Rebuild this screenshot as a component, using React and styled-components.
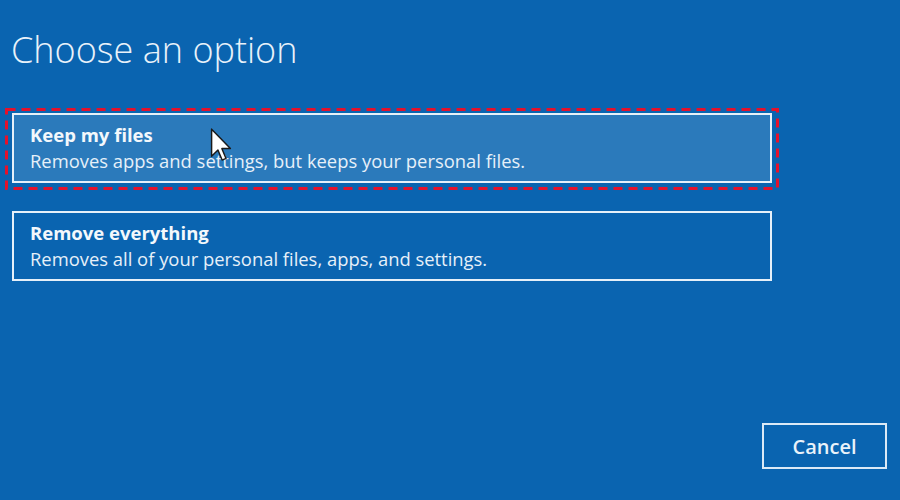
import React from "react";
import styled, { createGlobalStyle } from "styled-components";

const GlobalStyle = createGlobalStyle`
  html, body {
    margin: 0;
    padding: 0;
    background: #0a64b0;
  }
  #root {
    width: 900px;
    height: 500px;
  }
`;

const Screen = styled.div`
  box-sizing: border-box;
  width: 900px;
  height: 500px;
  background: #0a64b0;
  color: #eef5fb;
  font-family: "Open Sans", "Noto Sans", sans-serif;
  display: flex;
  flex-direction: column;
  padding: 27px 13px 31px 12px;
  overflow: hidden;
`;

const Heading = styled.h1`
  margin: 0 0 40px -1px;
  font-size: 36px;
  line-height: 46px;
  font-weight: 300;
  color: #e9f2fa;
  letter-spacing: 0;
`;

const OptionList = styled.div`
  display: flex;
  flex-direction: column;
  gap: 28px;
  width: 760px;
`;

const OptionCard = styled.div`
  position: relative;
  box-sizing: border-box;
  height: 70px;
  border: 2px solid #e6f0f9;
  padding: 8px 16px 6px;
  background: ${(p) => (p.$active ? "#2b7abb" : "transparent")};
  display: flex;
  flex-direction: column;
`;

const OptionTitle = styled.div`
  font-size: 18.5px;
  line-height: 24px;
  font-weight: 700;
  color: #f3f8fc;
`;

const OptionText = styled.div`
  font-size: 18.4px;
  line-height: 28px;
  font-weight: 400;
  color: #e6f0f9;
`;

/* dashed red marker drawn around the highlighted option */
const Marker = styled.svg`
  position: absolute;
  top: -7px;
  left: -9px;
  width: calc(100% + 18px);
  height: calc(100% + 16px);
  overflow: visible;
  pointer-events: none;

  rect {
    x: 1.5px;
    y: 1.5px;
    width: calc(100% - 3px);
    height: calc(100% - 3px);
  }
`;

const Footer = styled.div`
  margin-top: auto;
  display: flex;
  justify-content: flex-end;
`;

const CancelButton = styled.button`
  box-sizing: border-box;
  width: 125px;
  height: 46px;
  border: 2px solid #dbe9f6;
  background: #0a64b0;
  color: #e9f2fa;
  font-family: "Open Sans", "Noto Sans", sans-serif;
  font-size: 20px;
  font-weight: 600;
  padding: 0;
  cursor: default;
`;

const Pointer = styled.svg`
  position: absolute;
  left: 196px;
  top: 13px;
  width: 22px;
  height: 34px;
  pointer-events: none;
`;

function ArrowPointer() {
  return (
    <Pointer viewBox="0 0 13 21">
      <path
        d="M0.7 0.7 L0.7 17.4 L4.6 13.6 L7.2 19.8 L9.6 18.8 L7 12.7 L12.3 12.7 Z"
        fill="#ffffff"
        stroke="#1a1a1a"
        strokeWidth="0.9"
        strokeLinejoin="round"
      />
    </Pointer>
  );
}

function DashedMarker() {
  return (
    <Marker>
      <rect fill="none" stroke="#e3122c" strokeWidth="3" strokeDasharray="9 6" />
    </Marker>
  );
}

const options = [
  {
    title: "Keep my files",
    text: "Removes apps and settings, but keeps your personal files.",
    active: true,
  },
  {
    title: "Remove everything",
    text: "Removes all of your personal files, apps, and settings.",
    active: false,
  },
];

export default function App() {
  return (
    <>
      <GlobalStyle />
      <Screen>
        <Heading>Choose an option</Heading>
        <OptionList>
          {options.map((o) => (
            <OptionCard key={o.title} $active={o.active}>
              <OptionTitle>{o.title}</OptionTitle>
              <OptionText>{o.text}</OptionText>
              {o.active && <DashedMarker />}
              {o.active && <ArrowPointer />}
            </OptionCard>
          ))}
        </OptionList>
        <Footer>
          <CancelButton>Cancel</CancelButton>
        </Footer>
      </Screen>
    </>
  );
}
